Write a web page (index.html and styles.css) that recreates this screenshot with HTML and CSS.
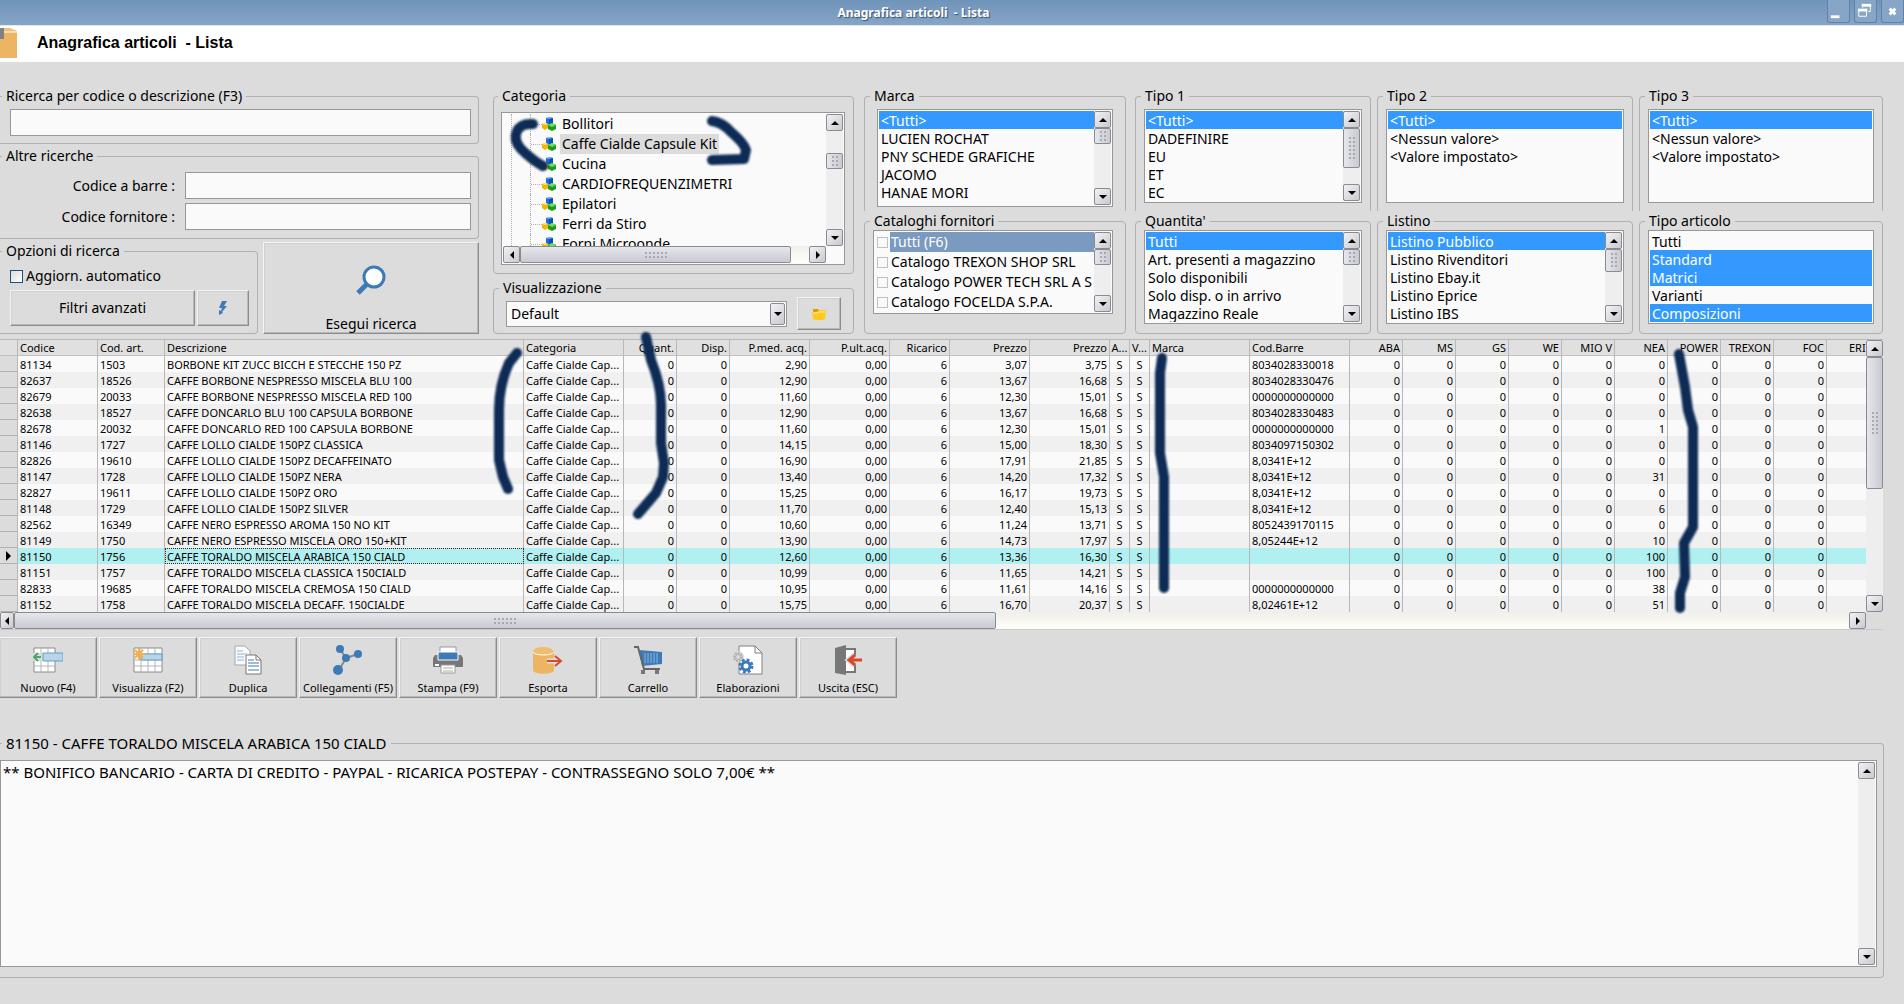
FILE: index.html
```
<!DOCTYPE html>
<html lang="it">
<head>
    <meta charset="UTF-8">
    <meta name="viewport" content="width=device-width, initial-scale=1.0">
    <title>Anagrafica articoli - Lista</title>
    <link rel="stylesheet" href="styles.css">
</head>
<body>
    <!-- shared icons -->
    <svg class="defs" aria-hidden="true">
        <symbol id="cubes" viewBox="0 0 14 14">
            <path d="M4 1l4-1 3 1v5l-4 2-3-2z" fill="#1a6fe0"/>
            <path d="M4 1l4-1 3 1-4 1z" fill="#7db8ff"/>
            <path d="M7 2l4-1v5L7 8z" fill="#0d4fb5"/>
            <path d="M0 7l3-1 3 1v4l-3 2-3-2z" fill="#f2b705"/>
            <path d="M0 7l3-1 3 1-3 1z" fill="#ffe27a"/>
            <path d="M6 8l4-2 4 2v4l-4 2-4-2z" fill="#1f9a1f"/>
            <path d="M6 8l4-2 4 2-4 2z" fill="#6fdc5a"/>
        </symbol>
        <symbol id="grid" viewBox="0 0 30 30">
            <path d="M1 3h28v24H1z" fill="#fff" stroke="#8a8a8a"/>
            <path d="M8 3v24M15 3v24M22 3v24M1 9h28M1 15h28M1 21h28" stroke="#b5b5b5" fill="none"/>
        </symbol>
    </svg>

    <div class="titlebar">
        <span class="titlebar-text">Anagrafica articoli  - Lista</span>
        <div class="window-buttons">
            <button type="button" aria-label="Riduci"><svg viewBox="0 0 22 22"><path d="M3 15h9v3H3z" fill="#fff"/></svg></button>
            <button type="button" aria-label="Ripristina"><svg viewBox="0 0 22 22"><path d="M8 4h8v7h-2M8 7V4" fill="none" stroke="#fff" stroke-width="1"/><path d="M7 3h10v3H7z" fill="#fff"/><path d="M4 9h8v7H4z" fill="none" stroke="#fff"/><path d="M3 8h10v3H3z" fill="#fff"/></svg></button>
            <button type="button" aria-label="Chiudi"><svg viewBox="0 0 22 22"><path d="M8 8l6 6M14 8l-6 6" stroke="#fff" stroke-width="3"/></svg></button>
        </div>
    </div>

    <header class="page-header">
        <svg class="header-icon" width="17" height="30" viewBox="0 0 17 30"><path d="M0 4h17v26H0z" fill="#ecb463"/><path d="M0 0h10l7 3v1H0z" fill="#f0c078"/><path d="M4 4h13" stroke="#fff"/><path d="M0 0h4v11H0z" fill="#808080"/></svg>
        <h1>Anagrafica articoli  - Lista</h1>
    </header>

    <form class="filters">
        <div class="col col-search">
            <fieldset class="group open-left search-main">
                <legend><label for="ricerca">Ricerca per codice o descrizione (F3)</label></legend>
                <input type="text" id="ricerca" class="field">
            </fieldset>
            <fieldset class="group open-left search-other">
                <legend>Altre ricerche</legend>
                <label for="barre">Codice a barre :</label>
                <input type="text" id="barre" class="field">
                <label for="fornitore">Codice fornitore :</label>
                <input type="text" id="fornitore" class="field">
            </fieldset>
            <div class="search-row">
                <fieldset class="group open-left search-options">
                    <legend>Opzioni di ricerca</legend>
                    <div class="check">
                        <input type="checkbox" id="auto">
                        <label for="auto">Aggiorn. automatico</label>
                    </div>
                    <div class="button-row">
                        <button type="button" class="btn btn-filters">Filtri avanzati</button>
                        <button type="button" class="btn btn-flash" aria-label="Filtro rapido">
                            <svg width="16" height="16" viewBox="0 0 16 16"><path d="M7 1h5L9 6h3l-5 6 1 1-4 2V10l2 1 1-3H4z" fill="#3d7ab8"/></svg>
                        </button>
                    </div>
                </fieldset>
                <button type="button" class="btn btn-search">
                    <svg width="30" height="30" viewBox="0 0 30 30"><path d="M2 28l9-9" stroke="#3d7ab8" stroke-width="5"/><circle cx="18" cy="12" r="10" fill="#fff" stroke="#3d7ab8" stroke-width="3"/></svg>
                    Esegui ricerca
                </button>
            </div>
        </div>

        <div class="col col-category">
            <fieldset class="group group-tree">
                <legend>Categoria</legend>
                <div class="tree-box">
                    <ul class="tree">
                        <li><svg><use href="#cubes"/></svg><span>Bollitori</span></li>
                        <li><svg><use href="#cubes"/></svg><span class="current">Caffe Cialde Capsule Kit</span></li>
                        <li><svg><use href="#cubes"/></svg><span>Cucina</span></li>
                        <li><svg><use href="#cubes"/></svg><span>CARDIOFREQUENZIMETRI</span></li>
                        <li><svg><use href="#cubes"/></svg><span>Epilatori</span></li>
                        <li><svg><use href="#cubes"/></svg><span>Ferri da Stiro</span></li>
                        <li><svg><use href="#cubes"/></svg><span>Forni Microonde</span></li>
                    </ul>
                    <div class="vbar"><i class="arrow up"></i><i class="space"></i><i class="thumb small"></i><i class="space wide"></i><i class="arrow down"></i></div>
                    <div class="hbar"><i class="arrow left"></i><i class="thumb"></i><i class="space"></i><i class="arrow right"></i></div>
                </div>
            </fieldset>
            <fieldset class="group group-view">
                <legend><label for="vista">Visualizzazione</label></legend>
                <div class="combo">
                    <select id="vista"><option>Default</option></select>
                    <i class="arrow down"></i>
                </div>
                <button type="button" class="btn btn-folder" aria-label="Apri">
                    <svg width="16" height="16" viewBox="0 0 16 16"><path d="M2 3h5l1 1h6v2H2z" fill="#e79a00"/><path d="M1 6h5l2-2h7l-1 9-2 1H4l-2-1z" fill="#ffc91f"/><path d="M2 7h5l1-1h6" stroke="#fff0a0" fill="none"/></svg>
                </button>
            </fieldset>
        </div>

        <div class="col col-brand">
            <fieldset class="group open-bottom">
                <legend><label for="marca">Marca</label></legend>
                <div class="listbox">
                    <select id="marca" multiple size="5">
                        <option selected>&lt;Tutti&gt;</option>
                        <option>LUCIEN ROCHAT</option>
                        <option>PNY SCHEDE GRAFICHE</option>
                        <option>JACOMO</option>
                        <option>HANAE MORI</option>
                    </select>
                    <div class="vbar"><i class="arrow up"></i><i class="thumb small"></i><i class="space"></i><i class="arrow down"></i></div>
                </div>
            </fieldset>
            <fieldset class="group">
                <legend>Cataloghi fornitori</legend>
                <div class="listbox catalogs">
                    <ul>
                        <li><input type="checkbox" id="cat0"><label for="cat0" class="current">Tutti (F6)</label></li>
                        <li><input type="checkbox" id="cat1"><label for="cat1">Catalogo TREXON SHOP SRL</label></li>
                        <li><input type="checkbox" id="cat2"><label for="cat2">Catalogo POWER TECH SRL A S</label></li>
                        <li><input type="checkbox" id="cat3"><label for="cat3">Catalogo FOCELDA S.P.A.</label></li>
                    </ul>
                    <div class="vbar"><i class="arrow up"></i><i class="thumb small"></i><i class="space"></i><i class="arrow down"></i></div>
                </div>
            </fieldset>
        </div>

        <div class="col">
            <fieldset class="group open-bottom">
                <legend><label for="tipo1">Tipo 1</label></legend>
                <div class="listbox">
                    <select id="tipo1" multiple size="5">
                        <option selected>&lt;Tutti&gt;</option>
                        <option>DADEFINIRE</option>
                        <option>EU</option>
                        <option>ET</option>
                        <option>EC</option>
                    </select>
                    <div class="vbar"><i class="arrow up"></i><i class="thumb large"></i><i class="space"></i><i class="arrow down"></i></div>
                </div>
            </fieldset>
            <fieldset class="group">
                <legend><label for="quantita">Quantita'</label></legend>
                <div class="listbox">
                    <select id="quantita" multiple size="5">
                        <option selected>Tutti</option>
                        <option>Art. presenti a magazzino</option>
                        <option>Solo disponibili</option>
                        <option>Solo disp. o in arrivo</option>
                        <option>Magazzino Reale</option>
                    </select>
                    <div class="vbar"><i class="arrow up"></i><i class="thumb small"></i><i class="space"></i><i class="arrow down"></i></div>
                </div>
            </fieldset>
        </div>

        <div class="col">
            <fieldset class="group open-bottom">
                <legend><label for="tipo2">Tipo 2</label></legend>
                <div class="listbox">
                    <select id="tipo2" multiple size="5">
                        <option selected>&lt;Tutti&gt;</option>
                        <option>&lt;Nessun valore&gt;</option>
                        <option>&lt;Valore impostato&gt;</option>
                    </select>
                </div>
            </fieldset>
            <fieldset class="group">
                <legend><label for="listino">Listino</label></legend>
                <div class="listbox">
                    <select id="listino" multiple size="5">
                        <option selected>Listino Pubblico</option>
                        <option>Listino Rivenditori</option>
                        <option>Listino Ebay.it</option>
                        <option>Listino Eprice</option>
                        <option>Listino IBS</option>
                    </select>
                    <div class="vbar"><i class="arrow up"></i><i class="thumb medium"></i><i class="space"></i><i class="arrow down"></i></div>
                </div>
            </fieldset>
        </div>

        <div class="col">
            <fieldset class="group open-bottom">
                <legend><label for="tipo3">Tipo 3</label></legend>
                <div class="listbox">
                    <select id="tipo3" multiple size="5">
                        <option selected>&lt;Tutti&gt;</option>
                        <option>&lt;Nessun valore&gt;</option>
                        <option>&lt;Valore impostato&gt;</option>
                    </select>
                </div>
            </fieldset>
            <fieldset class="group">
                <legend><label for="tipoart">Tipo articolo</label></legend>
                <div class="listbox">
                    <select id="tipoart" multiple size="5">
                        <option>Tutti</option>
                        <option selected>Standard</option>
                        <option selected>Matrici</option>
                        <option>Varianti</option>
                        <option selected>Composizioni</option>
                    </select>
                </div>
            </fieldset>
        </div>
    </form>

    <section class="grid-box">
        <div class="grid-scroll">
            <table class="items">
                <colgroup>
                    <col class="w-mark"><col class="w-code"><col class="w-art"><col class="w-desc"><col class="w-cat">
                    <col class="w-qty"><col class="w-qty"><col class="w-price"><col class="w-price"><col class="w-rate">
                    <col class="w-price"><col class="w-price"><col class="w-flag"><col class="w-flag"><col class="w-brand"><col class="w-brand">
                    <col class="w-stock"><col class="w-stock"><col class="w-stock"><col class="w-stock"><col class="w-stock"><col class="w-stock">
                    <col class="w-stock"><col class="w-stock"><col class="w-stock"><col>
                </colgroup>
                <thead>
                    <tr>
                        <th></th><th>Codice</th><th>Cod. art.</th><th>Descrizione</th><th>Categoria</th>
                        <th class="num">Quant.</th><th class="num">Disp.</th><th class="num">P.med. acq.</th><th class="num">P.ult.acq.</th><th class="num">Ricarico</th>
                        <th class="num">Prezzo</th><th class="num">Prezzo</th><th class="flag">A...</th><th class="flag">V...</th><th>Marca</th><th>Cod.Barre</th>
                        <th class="num">ABA</th><th class="num">MS</th><th class="num">GS</th><th class="num">WE</th><th class="num">MIO V</th><th class="num">NEA</th>
                        <th class="num">POWER</th><th class="num">TREXON</th><th class="num">FOC</th><th class="last">ERI</th>
                    </tr>
                </thead>
                <tbody id="rows"></tbody>
            </table>
        </div>
        <div class="vbar"><i class="arrow up"></i><i class="thumb half"></i><i class="space"></i><i class="arrow down"></i></div>
        <div class="hbar"><i class="arrow left"></i><i class="thumb"></i><i class="space"></i><i class="arrow right"></i></div>
    </section>

    <nav class="toolbar">
        <button type="button" class="btn">
            <svg viewBox="0 0 30 30"><path d="M1 3h21v24H1z" fill="#fff" stroke="#8a8a8a"/><path d="M8 3v24M15 3v24M1 9h21M1 21h21" stroke="#b5b5b5" fill="none"/><path d="M0 8h10v8H0z" fill="#dcdcdc"/><path d="M10 8h20v8H10z" fill="#b9d3e8" stroke="#5aa5c8"/><path d="M1 12h7M5 8l-4 4 4 4" stroke="#4ca678" stroke-width="2" fill="none"/></svg>
            Nuovo (F4)
        </button>
        <button type="button" class="btn">
            <svg viewBox="0 0 30 30"><use href="#grid"/><path d="M8 9h21v6H8z" fill="#b9d3e8" stroke="#5aa5c8"/><path d="M6 3v12M0 9h12M2 5l8 8M10 5l-8 8" stroke="#f0b050" stroke-width="2"/></svg>
            Visualizza (F2)
        </button>
        <button type="button" class="btn">
            <svg viewBox="0 0 30 30"><path d="M2 1h10l5 5v14H2z" fill="#fafafa" stroke="#a8a8a8"/><path d="M4 6h6M4 9h10M4 12h7M4 15h7" stroke="#8ab8e0"/><path d="M13 10h10l5 5v14H13z" fill="#fff" stroke="#777"/><path d="M23 10v5h5" fill="none" stroke="#777"/><path d="M15 15h6M15 18h11M15 21h11M15 25h11" stroke="#3d7ab8"/></svg>
            Duplica
        </button>
        <button type="button" class="btn">
            <svg viewBox="0 0 30 30"><path d="M7 4l6 9 12-4M13 13L6 25" stroke="#888" stroke-width="2" fill="none"/><circle cx="7" cy="4" r="4" fill="#3d7ab8"/><circle cx="13" cy="13" r="4" fill="#3d7ab8"/><circle cx="25" cy="9" r="4" fill="#3d7ab8"/><circle cx="5" cy="25" r="5" fill="#3d7ab8"/></svg>
            Collegamenti (F5)
        </button>
        <button type="button" class="btn">
            <svg viewBox="0 0 30 30"><path d="M2 10h3v5h20v-5h3l2 3v9H0v-9z" fill="#777"/><path d="M7 2h16v6H7z" fill="#fff" stroke="#999"/><path d="M5 7h20v8H5z" fill="#3d7ab8" stroke="#fff"/><path d="M8 20h14v8H8z" fill="#fff" stroke="#999"/><path d="M10 23h10M10 26h10" stroke="#aaa"/><path d="M2 19h4v2H2z" fill="#fff"/></svg>
            Stampa (F9)
        </button>
        <button type="button" class="btn">
            <svg viewBox="0 0 30 30"><path d="M0 6v19c0 5 21 5 21 0V6z" fill="#ecb463"/><ellipse cx="10" cy="6" rx="10" ry="4" fill="#f0bd70"/><path d="M0 7c1 4 20 4 21 0" stroke="#fff" fill="none"/><path d="M14 16h14M22 11l6 5-6 5" stroke="#dcdcdc" stroke-width="5" fill="none"/><path d="M14 16h14M22 11l6 5-6 5" stroke="#d8492c" stroke-width="2" fill="none"/></svg>
            Esporta
        </button>
        <button type="button" class="btn">
            <svg viewBox="0 0 30 30"><path d="M6 5l23 2v12l-20 2z" fill="#3d7ab8"/><path d="M12 8v10M15 8v10M18 8v10M21 8v10M24 8v10" stroke="#8fb6dc"/><path d="M1 2h4l6 22h16" stroke="#666" stroke-width="2" fill="none"/><path d="M8 25h4v4H8zM22 25h4v4h-4z" fill="#777"/></svg>
            Carrello
        </button>
        <button type="button" class="btn">
            <svg viewBox="0 0 30 30"><path d="M6 1h16l7 7v21H6z" fill="#fff" stroke="#808080"/><path d="M22 1v7h7" fill="none" stroke="#808080"/><circle cx="5" cy="12" r="6" fill="#dcdcdc"/><circle cx="5" cy="12" r="4" fill="none" stroke="#b0b0b0" stroke-width="2" stroke-dasharray="2 1"/><circle cx="5" cy="12" r="2.5" fill="none" stroke="#b0b0b0"/><circle cx="13" cy="21" r="6" fill="none" stroke="#3d7ab8" stroke-width="3" stroke-dasharray="2.7 2"/><circle cx="13" cy="21" r="4" fill="#fff" stroke="#3d7ab8" stroke-width="3"/></svg>
            Elaborazioni
        </button>
        <button type="button" class="btn">
            <svg viewBox="0 0 30 30"><path d="M12 4h10v23H12z" fill="#fff" stroke="#777" stroke-width="2"/><path d="M2 3l11-3v30L2 28z" fill="#777"/><path d="M16 15h13M22 10l-6 5 6 5" stroke="#dcdcdc" stroke-width="6" fill="none"/><path d="M16 15h13M22 10l-6 5 6 5" stroke="#d8492c" stroke-width="3" fill="none"/></svg>
            Uscita (ESC)
        </button>
    </nav>

    <fieldset class="group open-left notes">
        <legend><label for="note">81150 - CAFFE TORALDO MISCELA ARABICA 150 CIALD</label></legend>
        <div class="notes-box">
            <textarea id="note">** BONIFICO BANCARIO - CARTA DI CREDITO - PAYPAL - RICARICA POSTEPAY - CONTRASSEGNO SOLO 7,00€ **</textarea>
            <div class="vbar"><i class="arrow up"></i><i class="space"></i><i class="arrow down"></i></div>
        </div>
    </fieldset>

    <!-- pen marks -->
    <svg class="marks" width="1904" height="1004" viewBox="0 0 1904 1004" aria-hidden="true">
        <path d="M533 124Q521 123 517 131Q513 140 521 149Q532 160 543 166"/>
        <path d="M712 121Q722 122 731 132Q744 143 746 150L744 159L712 160"/>
        <path d="M517 353L509 363Q499 385 499 410V460L503 477L508 489"/>
        <path d="M646 337L651 360Q661 385 661 405V443L664 463L663 477L656 493L638 514"/>
        <path d="M1162 358L1160 373V453L1164 477V588"/>
        <path d="M1679 354L1685 387L1688 410L1693 427V527L1684 543L1685 577L1680 593V608"/>
    </svg>

    <script src="script.js"></script>
</body>
</html>
```
FILE: styles.css
```
* {
    box-sizing: border-box;
}
body {
    margin: 0;
    background: #dcdcdc;
    color: #000;
    font-family: 'Noto Sans', Tahoma, sans-serif;
    font-size: 14px;
    line-height: 18px;
    position: relative;
    overflow-x: hidden;
}
button, input, select, textarea {
    font: inherit;
    color: inherit;
    margin: 0;
    border-radius: 0;
}
ul {
    list-style: none;
    margin: 0;
    padding: 0;
}
.defs {
    display: none;
}

/* title bar */
.titlebar {
    display: flex;
    align-items: center;
    height: 26px;
    background: linear-gradient(#7094b9, #86a5c7);
    border-bottom: 1px solid #dfe8f2;
}
.titlebar-text {
    flex: 1;
    text-align: center;
    white-space: pre;
    color: #fff;
    font-size: 12px;
    font-weight: bold;
    text-shadow: 1px 1px 1px #33506f;
}
.window-buttons {
    display: flex;
    align-self: flex-start;
    gap: 4px;
}
.window-buttons button {
    width: 23px;
    height: 23px;
    padding: 0;
    background: #86a5c7;
    border: 1px solid #5f82a8;
    border-top: none;
    border-radius: 0 0 3px 3px;
}
.window-buttons svg {
    display: block;
}
.page-header {
    display: flex;
    align-items: center;
    gap: 20px;
    height: 36px;
    padding-bottom: 3px;
    background: #fff;
}
.page-header h1 {
    margin: 0;
    white-space: pre;
    font-family: 'Liberation Sans', Arial, sans-serif;
    font-size: 16px;
}

/* group boxes */
.group {
    min-width: 0;
    margin: 0;
    padding: 0 8px 8px;
    border: 1px solid #b0b0b0;
    border-radius: 4px;
}
.group legend {
    margin-left: -3px;
    padding: 0 4px;
}
.open-left {
    border-left: none;
    border-top-left-radius: 0;
    border-bottom-left-radius: 0;
}
.open-bottom {
    min-height: 124px;
    padding-bottom: 0;
    border-bottom: none;
    border-bottom-left-radius: 0;
    border-bottom-right-radius: 0;
}
.filters {
    display: grid;
    grid-template-columns: 487fr 365fr 265fr 236fr 256fr 244fr;
    column-gap: 6px;
    padding: 25px 21px 5px 0;
}
.col {
    display: flex;
    flex-direction: column;
    gap: 1px;
    min-width: 0;
}
.col > .group {
    flex: 1;
}
.col > .open-bottom {
    flex: none;
}
.field {
    display: block;
    width: 100%;
    height: 27px;
    background: #fafafa;
    border: 1px solid #989898;
}
.btn {
    background: #dcdcdc;
    border: 1px solid;
    border-color: #f4f4f4 #8c8c8c #8c8c8c #f4f4f4;
    box-shadow: inset -1px -1px #b8b8bc, inset 1px 1px #cfcfd6;
    padding: 0;
}
.btn svg {
    display: block;
    margin: 0 auto;
}

/* search column */
.col-search {
    gap: 3px;
    padding-right: 8px;
}
.col-search > .search-main {
    flex: none;
    padding: 4px 7px 7px 10px;
}
.col-search > .search-other {
    flex: none;
    display: grid;
    grid-template-columns: 165px 1fr;
    gap: 4px 10px;
    align-items: center;
    padding: 7px 7px 8px 10px;
}
.search-other > label {
    text-align: right;
}
.search-main legend, .search-other legend, .search-options legend {
    margin-left: -8px;
}
.search-row {
    display: grid;
    grid-template-columns: 258fr 216fr;
    gap: 5px;
    flex: 1;
}
.search-options {
    padding: 7px 8px 7px 10px;
}
.check {
    display: flex;
    align-items: center;
    gap: 3px;
    margin-bottom: 5px;
}
input[type=checkbox] {
    appearance: none;
    width: 13px;
    height: 13px;
    background: linear-gradient(135deg, #dcdcd7, #fff);
    border: 1px solid #1c5180;
}
.button-row {
    display: flex;
    gap: 2px;
}
.btn-filters {
    flex: 1;
    height: 36px;
}
.btn-flash {
    width: 52px;
}
.btn-search {
    display: flex;
    flex-direction: column;
    justify-content: flex-end;
    align-items: center;
    gap: 20px;
}
.btn-search svg {
    margin: 0;
}

/* category column */
.col-category {
    gap: 5px;
    padding-right: 4px;
}
.col-category > .group-tree {
    padding: 7px 8px 8px 7px;
}
.tree-box {
    display: grid;
    grid-template-columns: 1fr 17px;
    grid-template-rows: 132px 17px;
    padding: 1px;
    background: #fafafa;
    border: 1px solid #989898;
}
.tree {
    overflow: hidden;
    margin-left: 8px;
    border-left: 1px dotted #b0b0b0;
    padding-left: 18px;
}
.tree li {
    display: flex;
    align-items: center;
    height: 20px;
    border-left: 1px dotted #b0b0b0;
    white-space: nowrap;
}
.tree li::before {
    content: '';
    width: 11px;
    border-top: 1px dotted #b0b0b0;
}
.tree svg {
    width: 14px;
    height: 14px;
}
.tree span {
    margin-left: 4px;
    padding: 1px 2px;
}
.tree .current {
    background: #dcdcdc;
}
.col-category > .group-view {
    flex: none;
    display: flex;
    align-items: center;
    gap: 10px;
    padding: 0 12px 3px;
}
.group-view legend {
    margin-left: -7px;
}
.combo {
    flex: 1;
    display: flex;
    height: 26px;
    padding: 1px;
    background: #fafafa;
    border: 1px solid #989898;
}
.combo select {
    flex: 1;
    appearance: none;
    padding: 0 3px;
    background: none;
    border: none;
}
.combo .arrow {
    width: 15px;
    height: 22px;
}
.btn-folder {
    width: 44px;
    height: 33px;
}

/* list boxes */
.col-brand {
    padding-right: 3px;
}
.listbox {
    display: flex;
    height: 94px;
    padding: 1px;
    background: #fafafa;
    border: 1px solid #989898;
}
.open-bottom .listbox {
    margin-top: 4px;
}
.listbox select {
    flex: 1;
    min-width: 0;
    height: 90px;
    padding: 0;
    overflow: hidden;
    background: none;
    border: none;
    outline: none;
}
.listbox option {
    height: 18px;
    min-height: 18px;
    padding: 0 2px;
}
.listbox option:checked {
    background: linear-gradient(#3399ff, #3399ff);
    color: #fff;
}
.col-brand .listbox {
    margin-left: 4px;
    margin-right: 4px;
}
.col-brand .open-bottom .listbox {
    height: 98px;
}
.col-brand .catalogs {
    height: 84px;
    margin-left: 0;
}
.catalogs ul {
    flex: 1;
    min-width: 0;
    overflow: hidden;
}
.catalogs li {
    display: flex;
    align-items: center;
    gap: 2px;
    height: 20px;
    padding-left: 2px;
    white-space: nowrap;
}
.catalogs input[type=checkbox] {
    flex: none;
    width: 11px;
    height: 11px;
    background: #fafafa;
    border-color: #c0c0c0;
}
.catalogs label {
    flex: 1;
    padding: 1px;
}
.catalogs .current {
    background: #7a9abf;
    color: #fff;
}

/* scroll bars */
.vbar, .hbar {
    display: flex;
    background: #eee;
}
.vbar {
    flex: none;
    flex-direction: column;
    width: 17px;
}
.hbar {
    height: 17px;
    background: linear-gradient(#f1efe9, #fffffa);
}
.arrow, .thumb {
    display: flex;
    align-items: center;
    justify-content: center;
    flex: none;
    border: 1px solid #8a8b90;
    border-radius: 2px;
    background: linear-gradient(135deg, #f2f2f5, #c9cad0);
}
.arrow {
    width: 17px;
    height: 17px;
}
.arrow::after {
    content: '';
    border: 4px solid transparent;
}
.arrow.up::after {
    border-bottom-color: #000;
    border-top: none;
}
.arrow.down::after {
    border-top-color: #000;
    border-bottom: none;
}
.arrow.left::after {
    border-right-color: #000;
    border-left: none;
}
.arrow.right::after {
    border-left-color: #000;
    border-right: none;
}
.vbar .thumb {
    background: linear-gradient(90deg, #e6e7ec, #c9cad2);
}
.hbar .thumb {
    flex: 270;
    background: linear-gradient(#e6e7ec, #c9cad2);
}
.thumb::after {
    content: '';
    width: 8px;
    height: 24px;
    max-height: 80%;
    background: radial-gradient(circle, #a8a9b0 1px, transparent 1px) 0 0 / 4px 4px;
}
.hbar .thumb::after {
    width: 24px;
    height: 8px;
}
.small {
    height: 16px;
}
.medium {
    height: 23px;
}
.large {
    height: 40px;
}
.half {
    height: 132px;
}
.space {
    flex: 22;
}
.hbar .space {
    flex: 18;
}
.space.wide {
    flex: 60;
}

/* items table */
.grid-box {
    display: grid;
    grid-template-columns: 1fr 17px;
    margin-right: 21px;
    border-top: 1px solid #b8b8b8;
    border-bottom: 1px solid #c8c8cc;
}
.grid-scroll {
    overflow: hidden;
}
.items {
    width: 100%;
    table-layout: fixed;
    border-collapse: separate;
    border-spacing: 0;
    background: #fafafa;
    font-size: 11px;
    line-height: 15px;
}
.items th, .items td {
    height: 16px;
    padding: 0 2px;
    overflow: hidden;
    white-space: nowrap;
    text-align: left;
    font-weight: normal;
    border-right: 1px solid #b8b8b8;
}
.items th {
    background: #e0e0e0;
    border-bottom: 1px solid #c0c0c0;
}
.items tr:nth-child(even) td {
    background: #f0f0f0;
}
.items .mark, .items tr:nth-child(even) .mark {
    background: #dcdcdc;
    border-bottom: 1px solid #b0b0b0;
}
.items .num {
    text-align: right;
}
.items .flag {
    padding: 0;
    text-align: center;
}
.items .last {
    padding-left: 22px;
    text-overflow: clip;
    border-right: none;
}
.items .selected td:not(.mark) {
    background: #b0f0f0;
}
.items .selected .mark::after {
    content: '';
    display: block;
    margin-left: 4px;
    width: 0;
    border: 5px solid transparent;
    border-left-color: #000;
    border-right: none;
}
.items .selected .focus {
    outline: 1px dotted #502020;
    outline-offset: -1px;
}
.w-mark { width: 18px; }
.w-code { width: 80px; }
.w-art { width: 67px; }
.w-desc { width: 359px; }
.w-cat { width: 100px; }
.w-qty { width: 53px; }
.w-price { width: 80px; }
.w-rate { width: 60px; }
.w-flag { width: 20px; }
.w-brand { width: 100px; }
.w-stock { width: 53px; }
.grid-box .hbar .arrow.left {
    width: 14px;
}
.grid-box .hbar .thumb {
    flex: 980;
}
.grid-box .hbar .space {
    flex: 853;
}

/* toolbar */
.toolbar {
    display: flex;
    gap: 2px;
    margin-left: -1px;
    padding-top: 7px;
}
.toolbar .btn {
    display: flex;
    flex-direction: column;
    align-items: center;
    width: 98px;
    height: 61px;
    padding-top: 7px;
    font-size: 11px;
    line-height: 16px;
}
.toolbar svg {
    width: 30px;
    height: 30px;
    margin-bottom: 5px;
}

/* notes */
.notes {
    margin: 36px 20px 27px 0;
    padding: 8px 6px 10px 0;
    font-size: 15px;
}
.notes legend {
    margin-left: 2px;
}
.notes-box {
    display: flex;
    padding: 1px;
    background: #fafafa;
    border: 1px solid #989898;
}
.notes-box textarea {
    flex: 1;
    height: 203px;
    padding: 1px;
    resize: none;
    background: none;
    border: none;
    outline: none;
}

.marks {
    position: absolute;
    top: 0;
    left: 0;
    pointer-events: none;
    fill: none;
    stroke: #0d2b55;
    stroke-width: 10px;
    stroke-linecap: round;
    stroke-linejoin: round;
    filter: blur(1px);
}
```
FILE: script.js
```
// codice, cod. art., descrizione, p.med., prezzo, prezzo ivato, cod. barre, NEA
const articoli = [
    ['81134', '1503', 'BORBONE KIT ZUCC BICCH E STECCHE 150 PZ', '2,90', '3,07', '3,75', '8034028330018', '0'],
    ['82637', '18526', 'CAFFE BORBONE NESPRESSO MISCELA BLU 100', '12,90', '13,67', '16,68', '8034028330476', '0'],
    ['82679', '20033', 'CAFFE BORBONE NESPRESSO MISCELA RED 100', '11,60', '12,30', '15,01', '0000000000000', '0'],
    ['82638', '18527', 'CAFFE DONCARLO BLU 100 CAPSULA BORBONE', '12,90', '13,67', '16,68', '8034028330483', '0'],
    ['82678', '20032', 'CAFFE DONCARLO RED 100 CAPSULA BORBONE', '11,60', '12,30', '15,01', '0000000000000', '1'],
    ['81146', '1727', 'CAFFE LOLLO CIALDE 150PZ CLASSICA', '14,15', '15,00', '18,30', '8034097150302', '0'],
    ['82826', '19610', 'CAFFE LOLLO CIALDE 150PZ DECAFFEINATO', '16,90', '17,91', '21,85', '8,0341E+12', '0'],
    ['81147', '1728', 'CAFFE LOLLO CIALDE 150PZ NERA', '13,40', '14,20', '17,32', '8,0341E+12', '31'],
    ['82827', '19611', 'CAFFE LOLLO CIALDE 150PZ ORO', '15,25', '16,17', '19,73', '8,0341E+12', '0'],
    ['81148', '1729', 'CAFFE LOLLO CIALDE 150PZ SILVER', '11,70', '12,40', '15,13', '8,0341E+12', '6'],
    ['82562', '16349', 'CAFFE NERO ESPRESSO AROMA 150 NO KIT', '10,60', '11,24', '13,71', '8052439170115', '0'],
    ['81149', '1750', 'CAFFE NERO ESPRESSO MISCELA ORO 150+KIT', '13,90', '14,73', '17,97', '8,05244E+12', '10'],
    ['81150', '1756', 'CAFFE TORALDO MISCELA ARABICA 150 CIALD', '12,60', '13,36', '16,30', '', '100'],
    ['81151', '1757', 'CAFFE TORALDO MISCELA CLASSICA 150CIALD', '10,99', '11,65', '14,21', '', '100'],
    ['82833', '19685', 'CAFFE TORALDO MISCELA CREMOSA 150 CIALD', '10,95', '11,61', '14,16', '0000000000000', '38'],
    ['81152', '1758', 'CAFFE TORALDO MISCELA DECAFF. 150CIALDE', '15,75', '16,70', '20,37', '8,02461E+12', '51']
];

const num = (valore) => `<td class="num">${valore}</td>`;

document.getElementById('rows').innerHTML = articoli.map(([codice, art, desc, medio, prezzo, ivato, barre, nea]) => `
    <tr class="${codice === '81150' ? 'selected' : ''}">
        <td class="mark"></td><td>${codice}</td><td>${art}</td><td class="focus">${desc}</td><td>Caffe Cialde Cap...</td>
        ${num(0)}${num(0)}${num(medio)}${num('0,00')}${num(6)}${num(prezzo)}${num(ivato)}
        <td class="flag">S</td><td class="flag">S</td><td></td><td>${barre}</td>
        ${num(0).repeat(5)}${num(nea)}${num(0).repeat(3)}<td class="last"></td>
    </tr>`).join('');
```
